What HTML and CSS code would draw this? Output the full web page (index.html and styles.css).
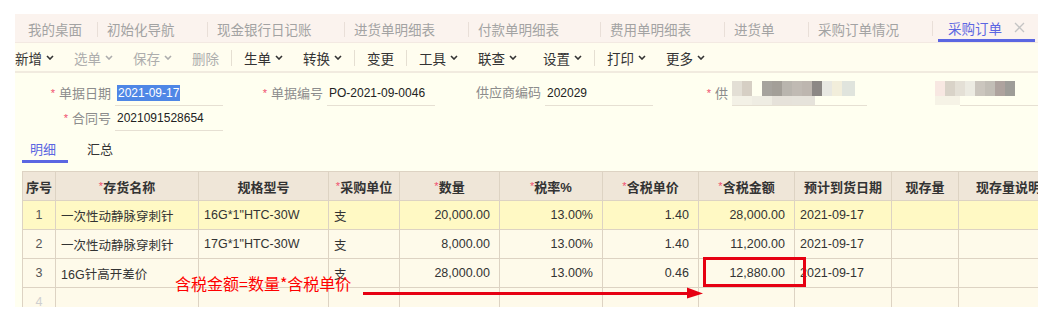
FILE: index.html
```html
<!DOCTYPE html>
<html lang="zh-CN">
<head>
  <meta charset="UTF-8">
  <title>采购订单</title>
  <link rel="stylesheet" href="styles.css">
</head>
<body>
  <div class="page">

    <!-- 顶部页签 -->
    <div class="tabs">
      <div class="tab first">我的桌面</div>
      <div class="tab"><i class="tab-sep"></i>初始化导航</div>
      <div class="tab"><i class="tab-sep"></i>现金银行日记账</div>
      <div class="tab"><i class="tab-sep"></i>进货单明细表</div>
      <div class="tab"><i class="tab-sep"></i>付款单明细表</div>
      <div class="tab"><i class="tab-sep"></i>费用单明细表</div>
      <div class="tab"><i class="tab-sep"></i>进货单</div>
      <div class="tab"><i class="tab-sep"></i>采购订单情况</div>
      <div class="tab active">
        <i class="tab-sep"></i>
        <div class="tab-inner">
          <span>采购订单</span>
          <svg class="close" width="11" height="11" viewBox="0 0 11 11"><path d="M1 1L10 10M10 1L1 10" stroke="#c4c4c4" stroke-width="1.3"/></svg>
        </div>
      </div>
    </div>

    <!-- 工具栏 -->
    <div class="toolbar">
      <div class="tool first">新增<svg class="chev" width="8" height="5" viewBox="0 0 8 5"><path d="M1 1L4 4L7 1" fill="none" stroke="currentColor" stroke-width="1.6"/></svg></div>
      <div class="tool off">选单<svg class="chev" width="8" height="5" viewBox="0 0 8 5"><path d="M1 1L4 4L7 1" fill="none" stroke="currentColor" stroke-width="1.6"/></svg></div>
      <div class="tool off">保存<svg class="chev" width="8" height="5" viewBox="0 0 8 5"><path d="M1 1L4 4L7 1" fill="none" stroke="currentColor" stroke-width="1.6"/></svg></div>
      <div class="tool off">删除</div>
      <i class="tool-sep"></i>
      <div class="tool">生单<svg class="chev" width="8" height="5" viewBox="0 0 8 5"><path d="M1 1L4 4L7 1" fill="none" stroke="currentColor" stroke-width="1.6"/></svg></div>
      <div class="tool">转换<svg class="chev" width="8" height="5" viewBox="0 0 8 5"><path d="M1 1L4 4L7 1" fill="none" stroke="currentColor" stroke-width="1.6"/></svg></div>
      <i class="tool-sep"></i>
      <div class="tool">变更</div>
      <i class="tool-sep"></i>
      <div class="tool">工具<svg class="chev" width="8" height="5" viewBox="0 0 8 5"><path d="M1 1L4 4L7 1" fill="none" stroke="currentColor" stroke-width="1.6"/></svg></div>
      <div class="tool wide">联查<svg class="chev" width="8" height="5" viewBox="0 0 8 5"><path d="M1 1L4 4L7 1" fill="none" stroke="currentColor" stroke-width="1.6"/></svg></div>
      <div class="tool">设置<svg class="chev" width="8" height="5" viewBox="0 0 8 5"><path d="M1 1L4 4L7 1" fill="none" stroke="currentColor" stroke-width="1.6"/></svg></div>
      <i class="tool-sep"></i>
      <div class="tool">打印<svg class="chev" width="8" height="5" viewBox="0 0 8 5"><path d="M1 1L4 4L7 1" fill="none" stroke="currentColor" stroke-width="1.6"/></svg></div>
      <div class="tool">更多<svg class="chev" width="8" height="5" viewBox="0 0 8 5"><path d="M1 1L4 4L7 1" fill="none" stroke="currentColor" stroke-width="1.6"/></svg></div>
    </div>

    <!-- 表头信息 -->
    <div class="form">
      <div class="form-row">
        <div class="label"><span class="req">*</span>单据日期</div>
        <div class="value"><span class="sel">2021-09-17</span></div>
        <div class="label"><span class="req">*</span>单据编号</div>
        <div class="value">PO-2021-09-0046</div>
        <div class="label">供应商编码</div>
        <div class="value">202029</div>
        <div class="label"><span class="req">*</span>供</div>
        <div class="value blurred"><div class="mosaic mosaic-a"></div></div>
        <div class="tail">
          <div class="mosaic mosaic-b"></div>
          <div class="value tail-line"></div>
        </div>
      </div>
      <div class="form-row">
        <div class="label"><span class="req">*</span>合同号</div>
        <div class="value">2021091528654</div>
      </div>
    </div>

    <!-- 明细 / 汇总 -->
    <div class="subtabs">
      <div class="subtab active">明细</div>
      <div class="subtab">汇总</div>
    </div>

    <table class="grid">
      <colgroup>
        <col class="c-no"><col class="c-name"><col class="c-spec"><col class="c-unit">
        <col class="c-qty"><col class="c-rate"><col class="c-price"><col class="c-amt">
        <col class="c-date"><col class="c-stock"><col class="c-note">
      </colgroup>
      <thead>
        <tr>
          <th>序号</th>
          <th><span class="star">*</span>存货名称</th>
          <th>规格型号</th>
          <th><span class="star">*</span>采购单位</th>
          <th><span class="star">*</span>数量</th>
          <th><span class="star">*</span>税率%</th>
          <th><span class="star">*</span>含税单价</th>
          <th><span class="star">*</span>含税金额</th>
          <th>预计到货日期</th>
          <th>现存量</th>
          <th>现存量说明</th>
        </tr>
      </thead>
      <tbody>
        <tr class="current">
          <td class="no">1</td><td>一次性动静脉穿刺针</td><td>16G*1"HTC-30W</td><td>支</td>
          <td class="num">20,000.00</td><td class="num">13.00%</td><td class="num">1.40</td><td class="num">28,000.00</td>
          <td>2021-09-17</td><td></td><td></td>
        </tr>
        <tr>
          <td class="no">2</td><td>一次性动静脉穿刺针</td><td>17G*1"HTC-30W</td><td>支</td>
          <td class="num">8,000.00</td><td class="num">13.00%</td><td class="num">1.40</td><td class="num">11,200.00</td>
          <td>2021-09-17</td><td></td><td></td>
        </tr>
        <tr>
          <td class="no">3</td><td>16G针高开差价</td><td></td><td>支</td>
          <td class="num">28,000.00</td><td class="num">13.00%</td><td class="num">0.46</td><td class="num">12,880.00</td>
          <td>2021-09-17</td><td></td><td></td>
        </tr>
        <tr class="empty">
          <td class="no">4</td><td></td><td></td><td></td><td></td><td></td><td></td><td></td><td></td><td></td><td></td>
        </tr>
      </tbody>
    </table>

    <!-- 批注 -->
    <div class="note">含税金额=数量*含税单价</div>
    <svg class="arrow" width="341" height="12" viewBox="0 0 341 12">
      <path d="M0 6.5H328" stroke="#e60012" stroke-width="3"/>
      <path d="M324 0.5L340 6.5L324 11.5Z" fill="#e60012"/>
    </svg>
    <div class="mark"></div>
  </div>
</body>
</html>
```

FILE: styles.css
```css
body {
  margin: 0;
  background: #fff;
  font-family: "Liberation Sans", "Noto Sans CJK SC", sans-serif;
  color: #333;
}
.page {
  position: relative;
  margin: 14px 10px 0 15px;
  height: 293px;
  overflow: hidden;
  background: #fffff0;
}

/* 页签 */
.tabs {
  display: grid;
  grid-template-columns: 82px 110px 137px 124px 132px 124px 84px 124px 1fr;
  height: 29px;
  background: #fbf3ee;
  border-bottom: 1px solid #f3e9e2;
  box-sizing: border-box;
}
.tab {
  display: flex;
  align-items: center;
  padding-top: 2px;
  font-size: 13.5px;
  color: #a3a3a3;
  white-space: nowrap;
}
.tab.first {
  padding-left: 13px;
}
.tab-sep {
  width: 1px;
  height: 15px;
  background: #e9dfd8;
  margin-right: 9px;
}
.tab.active {
  padding-top: 0;
  padding-right: 3px;
  align-items: stretch;
}
.tab.active .tab-sep {
  align-self: center;
  margin-right: 5px;
}
.tab-inner {
  flex: 1;
  display: flex;
  align-items: center;
  padding: 2px 0 0 10px;
  border-bottom: 3px solid #5b66e2;
  color: #5b66e2;
}
.close {
  margin-left: 12px;
}

/* 工具栏 */
.toolbar {
  display: flex;
  align-items: center;
  height: 30px;
  padding-top: 1px;
  box-sizing: border-box;
  background: #fffdef;
  border-bottom: 2px solid #f1ebdf;
  font-size: 13.5px;
  color: #333;
}
.tool {
  display: flex;
  align-items: center;
  gap: 4px;
  padding: 0 10px;
  white-space: nowrap;
}
.tool.first {
  padding-left: 0;
}
.tool.wide {
  padding-right: 16px;
}
.tool.off {
  color: #adadad;
}
.tool-sep {
  width: 1px;
  height: 16px;
  margin: 0 2px;
  background: #e5dfd2;
}

/* 表单 */
.form {
  padding-top: 8px;
}
.form-row {
  display: grid;
  grid-template-columns: 96px 108px 96px 108px 102px 108px 71px 135px 1fr;
  column-gap: 4px;
  height: 25px;
}
.label {
  text-align: right;
  font-size: 13px;
  line-height: 24px;
  color: #8c8c8c;
  white-space: nowrap;
}
.req {
  color: #f0506e;
  font-size: 11px;
  margin-right: 4px;
  vertical-align: 1px;
}
.value {
  border-bottom: 1px solid #e6e0d3;
  font-size: 12px;
  line-height: 24px;
  padding-left: 2px;
  color: #222;
  white-space: nowrap;
}
.sel {
  background: #4f87e6;
  color: #fff;
  padding: 1px 1px;
}
.blurred {
  padding-left: 0;
}
.mosaic {
  height: 24px;
  background-repeat: no-repeat;
}
.mosaic-a {
  width: 123px;
  background-image:
    linear-gradient(to right, #e3dfd5 0 10px, #d6cfc4 10px 20px, #fffff0 20px 30px, #a6a39d 30px 40px, #a39f98 40px 50px, #b9b5ae 50px 60px, #c0bab3 60px 70px, #bdb6af 70px 80px, #8c8885 80px 90px, #e8e8e2 90px 100px, #f2eedb 100px 110px, #e0e4dd 110px 123px),
    linear-gradient(to right, #f3f1e6 0 20px, #efede3 20px 40px, #e6e2da 40px 60px, #e6e3db 60px 83px, #fffff0 83px);
  background-size: 123px 15px, 123px 9px;
  background-position: 0 0, 0 15px;
}
.tail {
  display: flex;
}
.mosaic-b {
  flex: none;
  width: 80px;
  margin-left: 64px;
  background-image:
    linear-gradient(to right, #f8e8e2 0 10px, #d9d3c8 10px 20px, #e4e0d6 20px 30px, #ecebe2 30px 40px, #cbc6be 40px 50px, #c2beb6 50px 60px, #aea39e 60px 70px, #9e9d98 70px 80px),
    linear-gradient(to right, #f6f3e6 0 25px, #fffff0 25px);
  background-size: 80px 15px, 80px 9px;
  background-position: 0 0, 0 15px;
}
.tail-line {
  flex: 1;
  margin-left: -55px;
}

/* 明细 / 汇总 */
.subtabs {
  display: flex;
  gap: 11px;
  padding: 8px 0 0 7px;
}
.subtab {
  width: 46px;
  height: 24px;
  box-sizing: border-box;
  padding-left: 8px;
  font-size: 13px;
  line-height: 21px;
  color: #333;
  border-bottom: 3px solid transparent;
}
.subtab.active {
  color: #5b66e2;
  border-bottom-color: #5b66e2;
}

/* 明细表格 */
.grid {
  margin: 8px 0 0 7px;
  border-collapse: collapse;
  table-layout: fixed;
  width: 1036px;
}
.c-no { width: 33px; }
.c-name { width: 143px; }
.c-spec { width: 130px; }
.c-unit { width: 71px; }
.c-qty { width: 100px; }
.c-rate { width: 103px; }
.c-price { width: 96px; }
.c-amt { width: 96px; }
.c-date { width: 97px; }
.c-stock { width: 67px; }
.c-note { width: 100px; }
.grid th,
.grid td {
  border: 1px solid #ddd3c3;
  white-space: nowrap;
  overflow: hidden;
}
.grid th {
  height: 28px;
  padding: 0;
  background: #efe6d8;
  font-size: 13px;
  font-weight: bold;
  color: #333;
  text-align: center;
}
.star {
  color: #f0506e;
  font-weight: normal;
  font-size: 11px;
  vertical-align: 2px;
}
.grid td {
  height: 28px;
  padding: 0 5px;
  background: #fefaea;
  font-size: 12.5px;
  color: #333;
}
.grid tr.current td {
  background: #fff9c4;
}
.grid td.no {
  text-align: center;
  padding: 0;
  color: #555;
}
.grid td.num {
  text-align: right;
  padding-right: 9px;
}
.grid tr.empty td.no {
  color: #cfcfcf;
  vertical-align: top;
  padding-top: 7px;
}

/* 批注 */
.note {
  position: absolute;
  left: 160px;
  top: 260px;
  font-family: "Noto Sans CJK SC", sans-serif;
  font-size: 16px;
  line-height: 18px;
  color: #f00;
}
.arrow {
  position: absolute;
  left: 348px;
  top: 273px;
}
.mark {
  position: absolute;
  left: 688px;
  top: 243px;
  width: 103px;
  height: 30px;
  box-sizing: border-box;
  border: 3px solid #e60012;
}
```
